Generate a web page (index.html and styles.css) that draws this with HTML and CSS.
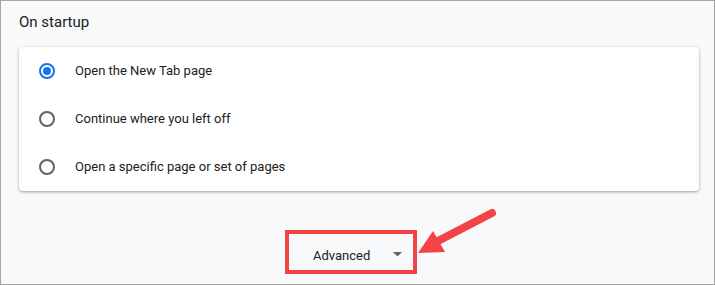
FILE: index.html
```html
<!DOCTYPE html>
<html>
<head>
<meta charset="utf-8">
<link rel="stylesheet" href="styles.css">
</head>
<body>
<div class="frame">
  <h2 class="heading">On startup</h2>
  <div class="card">
    <label class="row">
      <span class="radio checked"><span class="dot"></span></span>
      <span class="label">Open the New Tab page</span>
    </label>
    <label class="row">
      <span class="radio"></span>
      <span class="label">Continue where you left off</span>
    </label>
    <label class="row">
      <span class="radio"></span>
      <span class="label">Open a specific page or set of pages</span>
    </label>
  </div>
  <div class="footer">
    <div class="advanced">
      <span class="adv-text">Advanced</span>
      <svg class="caret" width="9" height="5" viewBox="0 0 9 5"><path d="M0 0 L9 0 L4.5 4.5 Z" fill="#5f6368"/></svg>
    </div>
  </div>
  <svg class="arrow" width="715" height="285" viewBox="0 0 715 285">
    <line x1="492" y1="213" x2="436" y2="242" stroke="#f44346" stroke-width="8" stroke-linecap="round"/>
    <polygon points="418,253 433,231 445,252" fill="#f44346"/>
  </svg>
</div>
</body>
</html>
```

FILE: styles.css
```css
html, body {
  margin: 0;
  padding: 0;
  background: #ffffff;
}

.frame {
  position: relative;
  box-sizing: border-box;
  width: 715px;
  height: 285px;
  border: 1px solid #a4a4a4;
  background: #f8f9fa;
  padding: 11px 15px 0 18px;
  font-family: Roboto, "Liberation Sans", sans-serif;
  color: #202124;
  overflow: hidden;
}

.heading {
  margin: 0;
  font-size: 15px;
  font-weight: 400;
  line-height: 20px;
  color: #202124;
}

.card {
  margin-top: 15px;
  background: #ffffff;
  border-radius: 4px;
  box-shadow: 0 1px 2px rgba(60, 64, 67, 0.3), 0 1px 3px 1px rgba(60, 64, 67, 0.15);
}

.row {
  display: flex;
  align-items: center;
  height: 48px;
  padding-left: 20px;
  gap: 20px;
}

.radio {
  box-sizing: border-box;
  width: 16px;
  height: 16px;
  border: 2px solid #5f6368;
  border-radius: 50%;
  display: flex;
  align-items: center;
  justify-content: center;
  flex: none;
}

.radio.checked {
  border-color: #1a73e8;
}

.dot {
  width: 8px;
  height: 8px;
  border-radius: 50%;
  background: #1a73e8;
}

.label {
  font-size: 13px;
  line-height: 20px;
  color: #202124;
}

.footer {
  display: flex;
  margin-top: 39px;
  padding-left: 266px;
}

.advanced {
  box-sizing: border-box;
  width: 132px;
  height: 44px;
  border: 4px solid #f44346;
  display: flex;
  align-items: center;
  padding-left: 24px;
  padding-top: 7px;
}

.adv-text {
  font-size: 13px;
  line-height: 20px;
  color: #202124;
}

.caret {
  margin-left: 23px;
  margin-top: -2px;
}

.arrow {
  position: absolute;
  left: -1px;
  top: -1px;
  pointer-events: none;
}
```
